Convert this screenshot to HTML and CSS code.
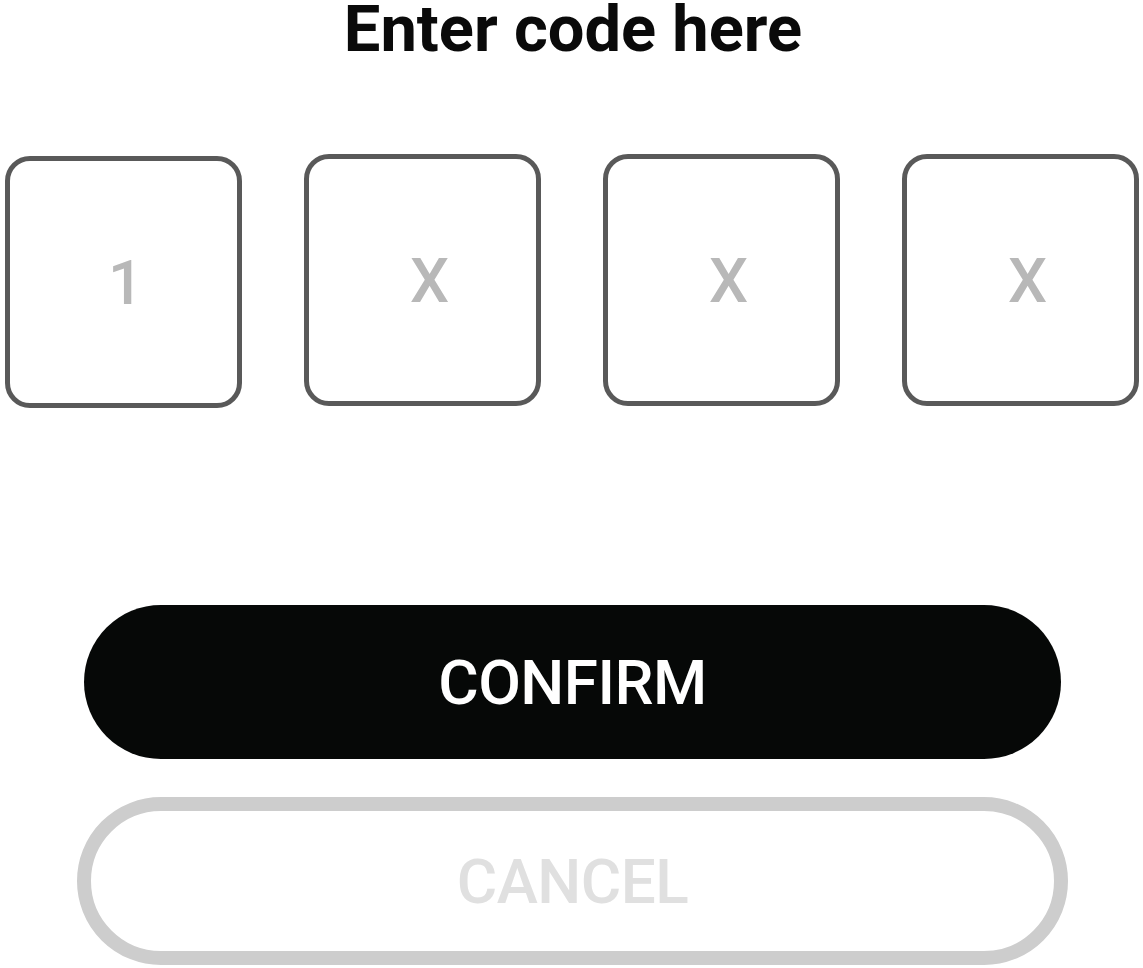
FILE: index.html
```html
<!DOCTYPE html>
<html lang="en">
<head>
    <meta charset="UTF-8">
    <meta name="viewport" content="width=device-width, initial-scale=1.0">
    <title>Enter code</title>
    <link rel="stylesheet" href="styles.css">
</head>
<body>

<div class="screen">
    <h1 class="title">Enter code here</h1>

    <div class="code-row">
        <div class="code-box">1</div>
        <div class="code-box">X</div>
        <div class="code-box">X</div>
        <div class="code-box">X</div>
    </div>

    <div class="actions">
        <button class="btn btn-confirm">CONFIRM</button>
        <button class="btn btn-cancel">CANCEL</button>
    </div>
</div>

</body>
</html>
```

FILE: styles.css
```css
body {
    margin: 0;
    padding: 0;
    background: #fff;
    font-family: Roboto, "Liberation Sans", Arial, sans-serif;
    overflow: hidden;
}

.screen {
    width: 1143px;
    height: 968px;
    display: flex;
    flex-direction: column;
}

.title {
    margin: 0;
    padding-left: 3px;
    font-size: 65px;
    line-height: 58px;
    font-weight: 700;
    color: #0a0a0a;
    text-align: center;
}

/* Code input boxes */
.code-row {
    display: flex;
    gap: 62px;
    margin-top: 96px;
    padding-left: 5px;
}

.code-box {
    box-sizing: border-box;
    width: 237px;
    height: 252px;
    padding-left: 101px;
    border: 5px solid #595959;
    border-radius: 25px;
    display: flex;
    align-items: center;
    font-size: 62px;
    font-weight: 500;
    color: #b8b8b8;
}

.code-box:first-child {
    margin-top: 2px;
    padding-left: 98px;
}

/* Buttons */
.actions {
    display: flex;
    flex-direction: column;
    margin-top: 197px;
}

.btn {
    box-sizing: border-box;
    font-family: Roboto, "Liberation Sans", Arial, sans-serif;
    font-size: 62px;
    font-weight: 500;
    letter-spacing: -0.5px;
    border-radius: 999px;
    display: flex;
    justify-content: center;
    align-items: center;
    padding: 0;
    cursor: pointer;
}

.btn-confirm {
    width: 977px;
    height: 154px;
    margin-left: 84px;
    background: #060807;
    color: #fff;
    border: none;
}

.btn-cancel {
    width: 991px;
    height: 168px;
    margin-left: 77px;
    margin-top: 38px;
    background: #fff;
    color: #e0e0e0;
    border: 14px solid #cdcdcd;
}
```
